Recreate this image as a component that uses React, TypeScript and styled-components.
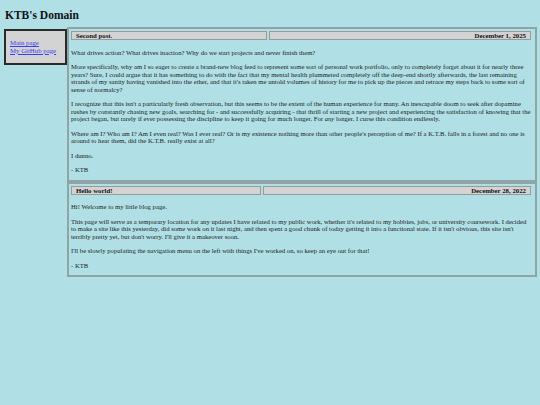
import React from "react";
import styled, { createGlobalStyle } from "styled-components";

const Global = createGlobalStyle`
  html, body { margin: 0; padding: 0; background: #b0e0e6; }
  body { font-family: "Liberation Serif", "Times New Roman", serif; color: #111; }
`;

const Page = styled.div`
  padding: 0 3px 0 4px;
`;

const Title = styled.h1`
  font-size: 11.5px;
  font-weight: bold;
  margin: 0;
  padding: 8px 1px 5px;
  line-height: 14px;
`;

const Layout = styled.div`
  display: flex;
  align-items: flex-start;
`;

const Nav = styled.nav`
  width: 55px;
  flex: none;
  border: 2px solid #2a2a2a;
  background: #d3d3d3;
  padding: 8px 0 9px 4px;
  display: flex;
  flex-direction: column;
  margin-top: 2px;
`;

const NavLink = styled.a`
  font-size: 6.8px;
  line-height: 7.6px;
  color: #3a3aee;
  text-decoration: underline;
  white-space: nowrap;
`;

const Posts = styled.div`
  flex: 1;
  display: flex;
  flex-direction: column;
`;

const Post = styled.article`
  border: 2px solid #8fa4a7;
  padding: 2px 4px 6px 2px;
`;

const Header = styled.div<{ $split: number }>`
  display: grid;
  grid-template-columns: ${(p) => p.$split}px 1fr;
  gap: 2px;
`;

const HeadCell = styled.div<{ $right?: boolean }>`
  box-sizing: border-box;
  height: 9px;
  background: #d3d3d3;
  border: 1px solid #9a9a9a;
  font-size: 6.8px;
  font-weight: bold;
  line-height: 7px;
  padding: 0 4px;
  text-align: ${(p) => (p.$right ? "right" : "left")};
`;

const Body = styled.div`
  padding: 8.5px 0 0 0;
  font-size: 6.68px;
  line-height: 7.5px;
  color: #1a1a1a;
  p { margin: 0 0 7px; }
  p:last-child { margin-bottom: 0; }
`;

const posts = [
  {
    title: "Second post.",
    date: "December 1, 2025",
    split: 196,
    paras: [
      <>What drives action? What drives inaction? Why do we start projects and never finish them?</>,
      <>More specifically, why am I so eager to create a brand-new blog feed to represent some sort of personal work portfolio, only to completely forget about it for nearly three years? Sure, I could argue that it has something to do with the fact that my mental health plummeted completely off the deep-end shortly afterwards, the last remaining strands of my sanity having vanished into the ether, and that it's taken me untold volumes of history for me to pick up the pieces and retrace my steps back to some sort of sense of normalcy?</>,
      <>I recognize that this isn't a particularly fresh observation, but this seems to be the extent of the human experience for many. An inescapable doom to seek after dopamine rushes by constantly chasing new goals, searching for - and successfully acquiring - that thrill of starting a new project and experiencing the satisfaction of knowing that the project began, but rarely if ever possessing the discipline to keep it going for much longer. For <i>any</i> longer. I curse this condition endlessly.</>,
      <>Where am I? Who am I? Am I even real? Was I ever real? Or is my existence nothing more than other people's perception of me? If a K.T.B. falls in a forest and no one is around to hear them, did the K.T.B. really exist at all?</>,
      <>I dunno.</>,
      <>- KTB</>,
    ],
  },
  {
    title: "Hello world!",
    date: "December 28, 2022",
    split: 190,
    paras: [
      <>Hi! Welcome to my little blog page.</>,
      <>This page will serve as a temporary location for any updates I have related to my public work, whether it's related to my hobbies, jobs, or university coursework. I decided to make a site like this yesterday, did some work on it last night, and then spent a good chunk of today getting it into a functional state. If it isn't obvious, this site isn't terribly pretty yet, but don't worry. I'll give it a makeover soon.</>,
      <>I'll be slowly populating the navigation menu on the left with things I've worked on, so keep an eye out for that!</>,
      <>- KTB</>,
    ],
  },
];

export default function App() {
  return (
    <Page>
      <Global />
      <Title>KTB's Domain</Title>
      <Layout>
        <Nav>
          <NavLink href="#">Main page</NavLink>
          <NavLink href="#">My GitHub page</NavLink>
        </Nav>
        <Posts>
          {posts.map((p) => (
            <Post key={p.title}>
              <Header $split={p.split}>
                <HeadCell>{p.title}</HeadCell>
                <HeadCell $right>{p.date}</HeadCell>
              </Header>
              <Body>
                {p.paras.map((c, i) => (
                  <p key={i}>{c}</p>
                ))}
              </Body>
            </Post>
          ))}
        </Posts>
      </Layout>
    </Page>
  );
}
